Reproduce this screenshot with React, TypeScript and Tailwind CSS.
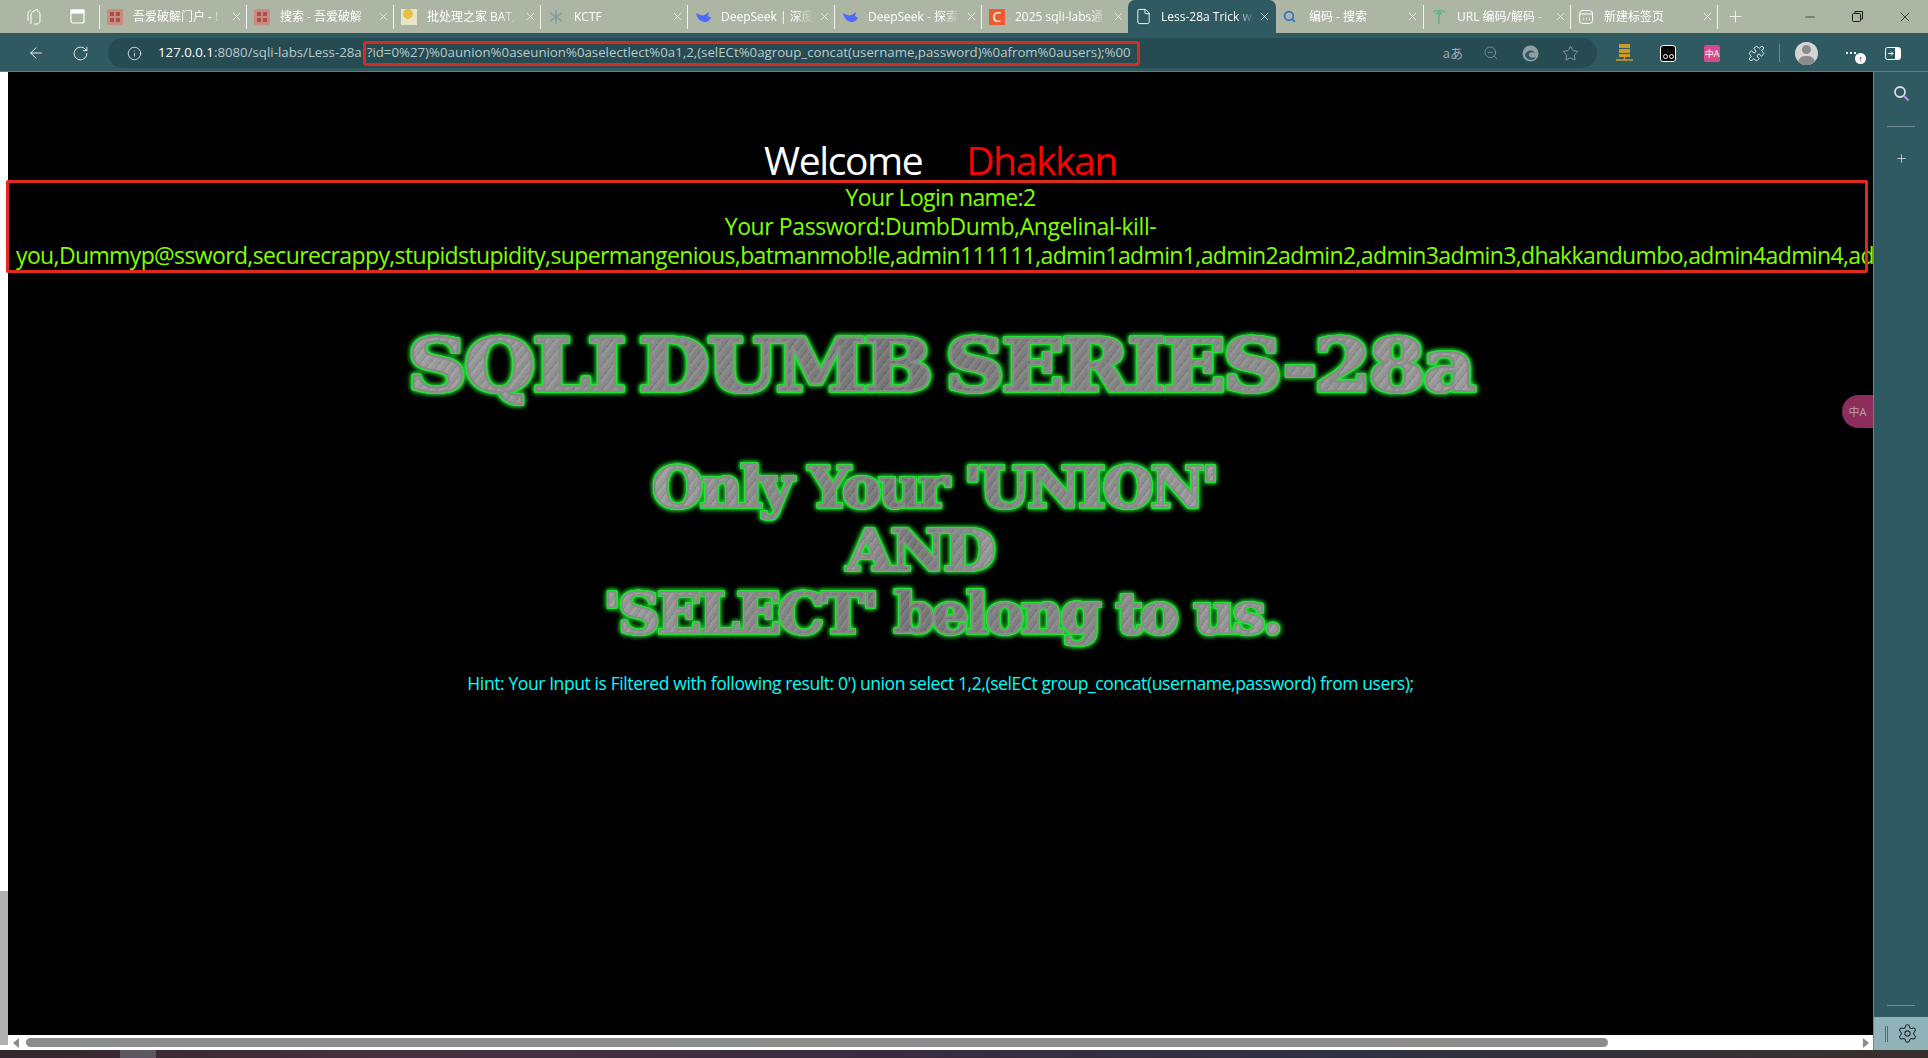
import { ArrowLeft, RotateCw, Info, ZoomOut, Star, Puzzle, Plus, X, Minus, Search, Settings, File } from "lucide-react";

const cjk = "font-['Open_Sans','Noto_Sans_CJK_SC',sans-serif]";

const Grid = () => (
  <svg width="16" height="16" viewBox="0 0 16 16">
    <rect width="16" height="16" rx="2" fill="#c98a80" />
    <path d="M3 3h4v4H3zM9 3h4v4H9zM3 9h4v4H3zM9 9h4v4H9z" fill="#a8504a" />
  </svg>
);

const Whale = () => (
  <svg width="17" height="14" viewBox="0 0 17 14">
    <path d="M1 3c1 5 4 9 9 9 3 0 5-2 6-5-1 0-2 0-3-1l1-4-3 2C9 6 6 6 1 3z" fill="#4d6bfe" />
  </svg>
);

const tabs = [
  { title: "吾爱破解门户 - !", icon: <Grid /> },
  { title: "搜索 - 吾爱破解", icon: <Grid /> },
  {
    title: "批处理之家 BAT,",
    icon: (
      <svg width="16" height="16" viewBox="0 0 16 16">
        <rect width="16" height="16" fill="#e8e4c8" />
        <circle cx="7" cy="5" r="5" fill="#e8c040" />
      </svg>
    ),
  },
  {
    title: "KCTF",
    icon: (
      <svg width="16" height="16" viewBox="0 0 16 16" fill="none" stroke="#7f9aa0" strokeWidth="1.5">
        <path d="M8 1v14M2 4l12 8M14 4L2 12" />
      </svg>
    ),
  },
  { title: "DeepSeek | 深度", icon: <Whale /> },
  { title: "DeepSeek - 探索", icon: <Whale /> },
  {
    title: "2025 sqli-labs通",
    icon: <span className="flex h-4 w-4 items-center justify-center bg-[#f05a33] text-[14px] leading-none text-white">C</span>,
  },
  { title: "Less-28a Trick wi", icon: <File size={17} strokeWidth={1.3} color="#fff" />, active: true },
  { title: "编码 - 搜索", icon: <Search size={13} strokeWidth={3} color="#2b74c9" /> },
  {
    title: "URL 编码/解码 -",
    icon: (
      <svg width="16" height="16" viewBox="0 0 16 16" fill="none" stroke="#62b58f" strokeWidth="1.6">
        <path d="M2 3c3-2 9-2 12 0M8 2v13M5 5l3-2 3 2" />
      </svg>
    ),
  },
  {
    title: "新建标签页",
    icon: (
      <svg width="16" height="16" viewBox="0 0 16 16" fill="none" stroke="#fff" strokeWidth="1">
        <rect x="1.5" y="1.5" width="13" height="13" rx="3" />
        <path d="M1.5 5h13M5 10h1M8 10h1M11 10h1" />
      </svg>
    ),
  },
];

function Tab({ title, icon, active }: { title: string; icon: React.ReactNode; active?: boolean }) {
  return (
    <div className={`flex h-[33px] min-w-0 flex-1 items-center pl-[7px] ${active ? "rounded-t-[7px] bg-[#2f5a62]" : ""}`}>
      <span className="flex w-[26px] shrink-0 items-center">{icon}</span>
      <span
        className={`w-[93px] overflow-hidden whitespace-nowrap text-[12px] leading-[17px] text-white [mask-image:linear-gradient(90deg,#000_80%,transparent)] ${cjk}`}
      >
        {title}
      </span>
      <X size={13} strokeWidth={1.2} color="#fff" className="ml-[4px] shrink-0" />
    </div>
  );
}

const Sep = () => <div className="h-[24px] w-px shrink-0 bg-[#f2f4ec]" />;

function TabStrip() {
  return (
    <div className="flex h-[33px] shrink-0 items-center bg-[#adb5a5]">
      <div className="flex w-[99px] shrink-0 items-center pl-[25px]">
        <svg width="18" height="18" viewBox="0 0 18 18" fill="none" stroke="#fff" strokeWidth="1" className="mr-[27px]">
          <path d="M6 16V7c0-2 1-3 3-4l4-2M3 13V6c0-2 1-3 3-4M9 16h3c2 0 3-1 3-3V6c0-2-1-3-3-3" />
        </svg>
        <svg width="15" height="15" viewBox="0 0 15 15" fill="none" stroke="#fff" strokeWidth="1.2">
          <rect x="1" y="1" width="13" height="13" rx="2" />
          <rect x="1" y="1" width="13" height="3" fill="#fff" />
        </svg>
      </div>
      {tabs.map((t, i) => (
        <div key={t.title} className={`flex items-center ${t.active ? "w-[148px]" : "w-[147px]"}`}>
          {!t.active && !tabs[i - 1]?.active && <Sep />}
          <Tab {...t} />
        </div>
      ))}
      <Sep />
      <Plus size={19} strokeWidth={1} color="#fff" className="ml-[8px]" />
      <div className="ml-auto flex items-center pr-[15px]">
        <Minus size={14} strokeWidth={1.2} color="#1c1c1c" className="mr-[35px]" />
        <svg width="11" height="11" viewBox="0 0 11 11" fill="none" stroke="#1c1c1c" className="mr-[34px]">
          <rect x="0.5" y="2.5" width="8" height="8" rx="1" />
          <path d="M3 2.5V.5h7.5V8H8.5" />
        </svg>
        <X size={16} strokeWidth={1.1} color="#1c1c1c" />
      </div>
    </div>
  );
}

function Toolbar() {
  return (
    <div className="flex h-[39px] shrink-0 items-center border-b border-[#5d7f85] bg-[#2f5a62] pl-[27px] pt-[2px]">
      <ArrowLeft size={18} strokeWidth={1.2} color="#fff" className="mr-[27px]" />
      <RotateCw size={17} strokeWidth={1.2} color="#fff" className="mr-[19px]" />
      <div className="flex h-[30px] w-[1489px] shrink-0 items-center rounded-full bg-[#274b52] pl-[19px]">
        <Info size={15} strokeWidth={1.2} color="#fff" className="mr-[16px]" />
        <span className={`whitespace-nowrap text-[13.25px] text-[#b9c9cc] ${cjk}`}>
          <span className="text-white">127.0.0.1</span>:8080/sqli-labs/Less-28a
        </span>
        <span
          className={`ml-[1px] flex h-[25px] w-[777px] shrink-0 items-center whitespace-nowrap rounded-[3px] border-[3px] border-[#d92c20] pl-[1px] text-[13.25px] text-[#b9c9cc] ${cjk}`}
        >
          ?id=0%27)%0aunion%0aseunion%0aselectlect%0a1,2,(selECt%0agroup_concat(username,password)%0afrom%0ausers);%00
        </span>
        <span className={`ml-[303px] text-[13px] leading-none text-[#9fb0b3] ${cjk}`}>aあ</span>
        <ZoomOut size={16} strokeWidth={1.1} color="#8fa3a6" className="ml-[20px]" />
        <svg width="17" height="17" viewBox="0 0 17 17" className="ml-[23px]">
          <circle cx="8.5" cy="8.5" r="8" fill="#8fa0a3" />
          <path d="M3 10c1-5 8-6 10-2-2-1-5-1-6 1s2 5 7 3c-3 5-10 3-11-2z" fill="#2f5a62" />
        </svg>
        <Star size={17} strokeWidth={1.1} color="#9fb0b3" className="ml-[23px]" />
      </div>
      <svg width="17" height="18" viewBox="0 0 17 18" className="ml-[19px] shrink-0">
        <path d="M3 0h11v4H3zM3 5h11v4H3zM3 10h11v3H3z" fill="#c99a2e" />
        <path d="M0 16h17M8.5 13v3" stroke="#c99a2e" strokeWidth="1.4" />
      </svg>
      <div className="ml-[27px] flex h-[17px] w-[16px] shrink-0 items-end justify-center gap-px rounded-[3px] border border-white bg-black pb-[2px]">
        <span className="h-[5px] w-[5px] rounded-full border border-white" />
        <span className="h-[5px] w-[5px] rounded-full border border-white" />
      </div>
      <div
        className={`ml-[28px] flex h-[17px] w-[16px] shrink-0 items-center justify-center rounded-[2px] bg-[#d9478c] text-[9px] leading-none text-white ${cjk}`}
      >
        中A
      </div>
      <Puzzle size={17} strokeWidth={1.2} color="#fff" className="ml-[28px] shrink-0" />
      <div className="ml-[14px] h-[18px] w-px shrink-0 bg-[#6a8a90]" />
      <div className="relative ml-[15px] h-[23px] w-[23px] shrink-0 overflow-hidden rounded-full bg-[#d5d5d5]">
        <span className="absolute left-[7px] top-[3px] h-[9px] w-[9px] rounded-full bg-[#8b8b8b]" />
        <span className="absolute left-[3px] top-[14px] h-[14px] w-[17px] rounded-full bg-[#8b8b8b]" />
      </div>
      <div className="relative ml-[28px] flex shrink-0 gap-[2px]">
        <span className="h-[2px] w-[2px] bg-white" />
        <span className="h-[2px] w-[2px] bg-white" />
        <span className="h-[2px] w-[2px] bg-white" />
        <span className="absolute left-[9px] top-[1px] flex h-[11px] w-[11px] items-center justify-center rounded-full bg-white text-[9px] font-bold leading-none text-black">
          ↑
        </span>
      </div>
      <svg width="16" height="13" viewBox="0 0 16 13" className="ml-[29px] shrink-0">
        <rect x="0.5" y="0.5" width="15" height="12" rx="2" fill="none" stroke="#fff" />
        <rect x="10" y="1" width="5" height="11" fill="#fff" />
        <path d="M3 6.5h5M6 4.5l2 2-2 2" fill="none" stroke="#fff" />
      </svg>
    </div>
  );
}

function Sidebar() {
  return (
    <div className="flex w-[55px] shrink-0 flex-col items-center border-l border-[#6a878c] bg-[#2f5a62]">
      <svg width="17" height="17" viewBox="0 0 17 17" fill="none" className="mt-[13px]">
        <circle cx="7" cy="7" r="5" stroke="#d8e0e2" strokeWidth="1.8" />
        <path d="M11 11l4.5 4.5" stroke="#b48be0" strokeWidth="2.4" />
      </svg>
      <div className="mt-[24px] h-px w-[28px] bg-[#6f8f94]" />
      <Plus size={13} strokeWidth={1.2} color="#fff" className="mt-[25px]" />
      <div className="mb-[11px] mt-auto h-px w-[28px] bg-[#6f8f94]" />
      <div className="flex h-[33px] w-full items-center justify-center gap-[9px] bg-[#8fb3b9]">
        <div className="h-[16px] w-[3px] border-x border-[#4f6f74]" />
        <Settings size={21} strokeWidth={1.2} color="#1d2b2e" />
      </div>
    </div>
  );
}

const Metal =
  "block bg-[linear-gradient(100deg,rgba(255,255,255,0.12),rgba(0,0,0,0.18)_45%,rgba(255,255,255,0.1)),repeating-linear-gradient(125deg,#8e8e8e_0px,#8e8e8e_3px,#7f7f7f_3px,#7f7f7f_4px,#999999_4px,#999999_7px)] bg-clip-text text-transparent [filter:drop-shadow(1px_0_0_#24e236)_drop-shadow(-1px_0_0_#24e236)_drop-shadow(0_1px_0_#24e236)_drop-shadow(0_-1px_0_#24e236)_drop-shadow(0_0_2px_#20d832)_drop-shadow(0_0_2px_#149a22)] font-['DejaVu_Serif',serif] font-bold";

function Page() {
  return (
    <div className="relative min-h-0 flex-1">
      <div className="h-full overflow-hidden bg-black text-center font-['Open_Sans',sans-serif]">
        <div className="mt-[66px] flex justify-center text-[39px] leading-[44px] tracking-[-1.4px]">
          <span className="text-white">Welcome</span>
          <span className="ml-[44px] text-[#ff0000]">Dhakkan</span>
        </div>
        <div className="px-[8px] pt-[1px] text-[23px] leading-[29px] tracking-[-0.63px] text-[#7fff00]">
          <div>Your Login name:2</div>
          <div className="tracking-[-0.4px]">Your Password:DumbDumb,Angelinal-kill-</div>
          <div className="whitespace-nowrap text-left">
            you,Dummyp@ssword,securecrappy,stupidstupidity,supermangenious,batmanmob!le,admin111111,admin1admin1,admin2admin2,admin3admin3,dhakkandumbo,admin4admin4,admin5admin5
          </div>
        </div>
        <div className="mt-[54px] flex justify-center">
          <h1
            className={`scale-x-[1.13] whitespace-nowrap text-[72px] leading-[84px] tracking-[-1.9px] [word-spacing:-10px] [-webkit-text-stroke:2px_#8a8a8a] ${Metal}`}
          >
            SQLI DUMB SERIES-28a
          </h1>
        </div>
        <div className="mt-[48px] flex flex-col items-center text-[56px] leading-[63px] tracking-[-2.5px] [-webkit-text-stroke:1.5px_#8a8a8a]">
          <span className={`ml-[-12px] scale-x-[1.04] ${Metal}`}>Only Your 'UNION'</span>
          <span className={`ml-[-42px] scale-x-[1.08] ${Metal}`}>AND</span>
          <span className={`ml-[2px] scale-x-[1.03] ${Metal}`}>'SELECT' belong to us.</span>
        </div>
        <div className="mt-[26px] text-[17.5px] leading-[24px] tracking-[-0.4px] text-[#00ffff]">
          Hint: Your Input is Filtered with following result: 0') union select 1,2,(selECt group_concat(username,password) from users);
        </div>
      </div>
      <div className="absolute left-[-2px] top-[108px] h-[93px] w-[1862px] rounded-[2px] border-[3px] border-[#e02a1e]" />
      <div
        className={`absolute right-0 top-[323px] flex h-[33px] w-[31px] items-center justify-center rounded-l-full bg-[#8c2d5c] text-[11px] leading-none text-[#b9a0ae] ${cjk}`}
      >
        中A
      </div>
    </div>
  );
}

function HScroll() {
  return (
    <div className="flex h-[15px] shrink-0 items-center bg-white pl-[5px] pr-[4px]">
      <span className="h-0 w-0 border-y-[5px] border-r-[6px] border-y-transparent border-r-[#8a8a8a]" />
      <div className="ml-[7px] h-[9px] w-[1582px] rounded-full bg-[#8c8c8c]" />
      <span className="ml-auto h-0 w-0 border-y-[5px] border-l-[6px] border-y-transparent border-l-[#8a8a8a]" />
    </div>
  );
}

function Taskbar() {
  return (
    <div className="relative flex h-[8px] shrink-0 bg-[linear-gradient(90deg,#33262c,#46303f_20%,#3a2c40_45%,#2f3142_70%,#3a2f2d)]">
      <div className="ml-[120px] h-full w-[36px] bg-[#5b5660]" />
    </div>
  );
}

export default function App() {
  return (
    <div className="flex h-[1058px] w-[1928px] flex-col overflow-hidden bg-black">
      <TabStrip />
      <Toolbar />
      <div className="flex min-h-0 flex-1">
        <div className="flex w-[8px] shrink-0 flex-col bg-white">
          <div className="mt-[819px] h-[154px] bg-[#b0b0b0]" />
        </div>
        <div className="flex min-w-0 flex-1 flex-col">
          <Page />
          <HScroll />
        </div>
        <Sidebar />
      </div>
      <Taskbar />
    </div>
  );
}
